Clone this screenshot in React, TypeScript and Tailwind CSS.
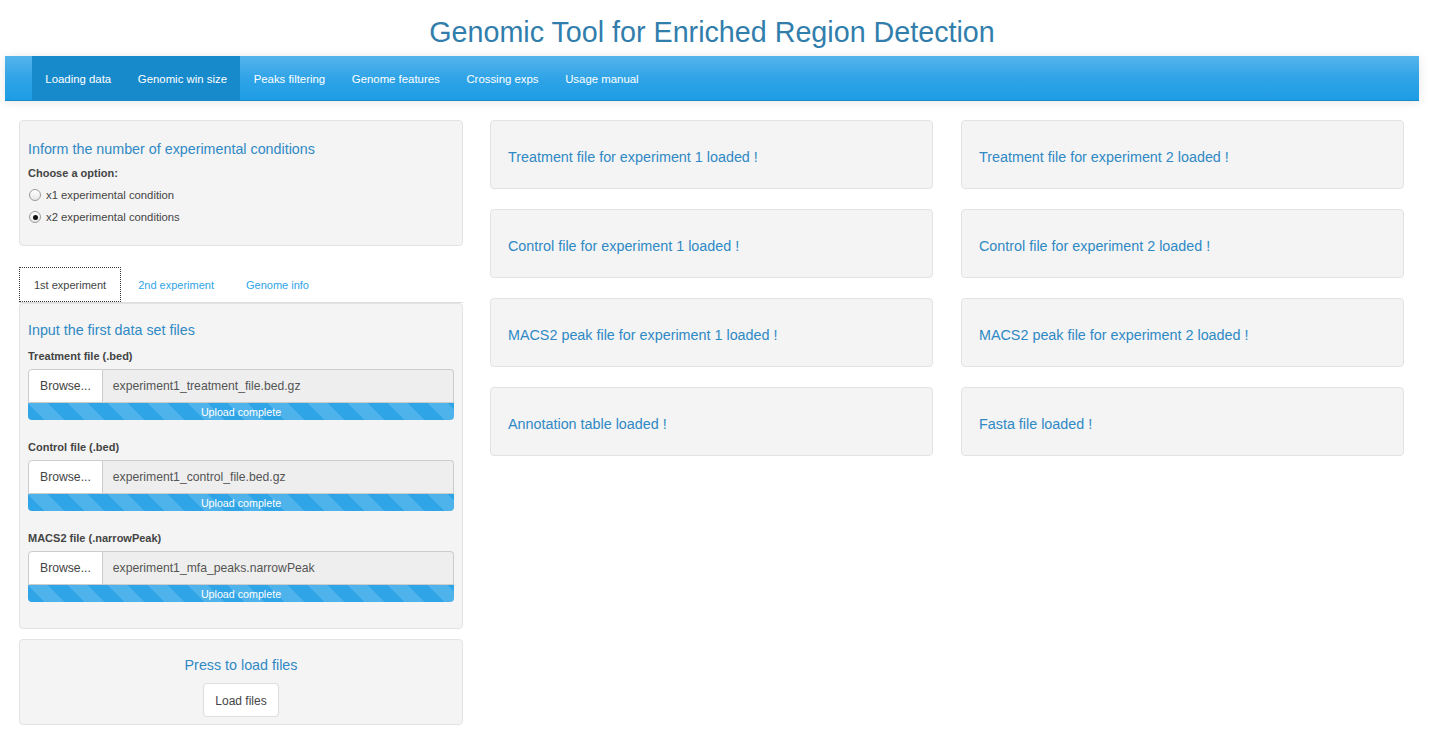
import React from 'react'

// ---------------------------------------------------------------------------
// Data
// ---------------------------------------------------------------------------

const navItems = [
  { label: 'Loading data', active: true },
  { label: 'Genomic win size', active: true },
  { label: 'Peaks filtering', active: false },
  { label: 'Genome features', active: false },
  { label: 'Crossing exps', active: false },
  { label: 'Usage manual', active: false },
]

const files = [
  { label: 'Treatment file (.bed)', name: 'experiment1_treatment_file.bed.gz' },
  { label: 'Control file (.bed)', name: 'experiment1_control_file.bed.gz' },
  { label: 'MACS2 file (.narrowPeak)', name: 'experiment1_mfa_peaks.narrowPeak' },
]

const exp1 = [
  'Treatment file for experiment 1 loaded !',
  'Control file for experiment 1 loaded !',
  'MACS2 peak file for experiment 1 loaded !',
  'Annotation table loaded !',
]

const exp2 = [
  'Treatment file for experiment 2 loaded !',
  'Control file for experiment 2 loaded !',
  'MACS2 peak file for experiment 2 loaded !',
  'Fasta file loaded !',
]

// ---------------------------------------------------------------------------
// Pieces
// ---------------------------------------------------------------------------

function Radio({ checked, label }: { checked?: boolean; label: string }) {
  return (
    <div className="flex items-center h-[22px] pl-[1px]">
      <span className="flex items-center justify-center w-[12px] h-[12px] rounded-full border border-[#9a9a9a] bg-gradient-to-b from-white to-[#e8e8e8]">
        {checked && <span className="w-[5px] h-[5px] rounded-full bg-[#111]" />}
      </span>
      <span className="ml-[5px] text-[11.3px] text-[#444]">{label}</span>
    </div>
  )
}

function FileInput({ label, name }: { label: string; name: string }) {
  return (
    <div className="flex flex-col">
      <div className="h-[16px] leading-[16px] text-[11px] font-bold text-[#444]">{label}</div>
      <div className="mt-[5px] flex h-[34px]">
        <div className="flex items-center px-[11px] bg-white border border-[#ccc] rounded-tl-[4px] text-[12.2px] text-[#444]">
          Browse...
        </div>
        <div className="flex-1 flex items-center px-[10px] bg-[#eeeeee] border border-l-0 border-[#ccc] rounded-tr-[4px] text-[12.2px] text-[#555]">
          {name}
        </div>
      </div>
      <div className="h-[17px] flex items-center justify-center pt-[2px] rounded-b-[4px] bg-[#2fa4e7] bg-[linear-gradient(45deg,rgba(255,255,255,.15)_25%,transparent_25%,transparent_50%,rgba(255,255,255,.15)_50%,rgba(255,255,255,.15)_75%,transparent_75%,transparent)] bg-[length:40px_40px] text-[10.7px] text-white">
        Upload complete
      </div>
    </div>
  )
}

function StatusCard({ text }: { text: string }) {
  return (
    <div className="h-[69px] flex items-center px-[17px] pt-[6px] bg-[#f4f4f4] border border-[#e3e3e3] rounded-[4px]">
      <span className="text-[14.35px] text-[#2f89c5]">{text}</span>
    </div>
  )
}

// ---------------------------------------------------------------------------
// Component
// ---------------------------------------------------------------------------

export default function App() {
  return (
    <div
      className="w-[1424px] min-h-[740px] bg-white text-[#555]"
      style={{ fontFamily: '"Liberation Sans", Arial, sans-serif' }}
    >
      {/* Title */}
      <div className="h-[56px] pt-[12px] text-center">
        <h1 className="text-[28.7px] leading-[40px] text-[#317eac]">Genomic Tool for Enriched Region Detection</h1>
      </div>

      {/* Navbar */}
      <nav className="mx-[5px] h-[45px] flex pl-[27px] bg-gradient-to-b from-[#54b4eb] via-[#2fa4e7] to-[#1d9ce5] border-b border-[#178acc] shadow-[0_1px_10px_rgba(0,0,0,0.1)]">
        {navItems.map(item => (
          <div
            key={item.label}
            className={`flex items-center pt-[3px] px-[13.3px] text-[11.4px] text-white ${item.active ? 'bg-[#178acc]' : ''}`}
          >
            {item.label}
          </div>
        ))}
      </nav>

      {/* Main */}
      <div className="flex items-start pl-[19px] pt-[19px]">
        {/* Left column */}
        <div className="w-[444px] flex flex-col">
          <div className="h-[126px] px-[8px] pt-[18px] bg-[#f4f4f4] border border-[#e3e3e3] rounded-[4px]">
            <h4 className="text-[14.3px] leading-[20px] text-[#2f89c5]">Inform the number of experimental conditions</h4>
            <div className="mt-[6px] h-[16px] leading-[16px] text-[11px] font-bold text-[#444]">Choose a option:</div>
            <div className="mt-[3px]">
              <Radio label="x1 experimental condition" />
              <Radio checked label="x2 experimental conditions" />
            </div>
          </div>

          {/* Tabs */}
          <div className="mt-[21px] flex h-[36px] border-b border-[#ddd]">
            <div className="flex items-center pt-[1px] px-[14px] bg-white border border-dotted border-[#333] text-[11px] text-[#444]">
              1st experiment
            </div>
            <div className="flex items-center pt-[1px] ml-[2px] px-[15px] text-[11px] text-[#2fa4e7]">2nd experiment</div>
            <div className="flex items-center pt-[1px] ml-[2px] px-[15px] text-[11px] text-[#2fa4e7]">Genome info</div>
          </div>

          <div className="h-[326px] px-[8px] pt-[16px] bg-[#f4f4f4] border border-[#e3e3e3] rounded-[4px]">
            <h4 className="text-[14.3px] leading-[20px] text-[#2f89c5]">Input the first data set files</h4>
            <div className="mt-[8px] flex flex-col gap-[19px]">
              {files.map(f => (
                <FileInput key={f.label} label={f.label} name={f.name} />
              ))}
            </div>
          </div>

          {/* Load */}
          <div className="mt-[10px] h-[86px] flex flex-col items-center pt-[15px] bg-[#f4f4f4] border border-[#e3e3e3] rounded-[4px]">
            <h4 className="text-[14.3px] leading-[20px] text-[#2f89c5]">Press to load files</h4>
            <button className="mt-[8px] h-[34px] px-[11px] pt-[2px] bg-white border border-[#ddd] rounded-[4px] text-[12px] text-[#444]">
              Load files
            </button>
          </div>
        </div>

        {/* Experiment 1 */}
        <div className="ml-[27px] w-[443px] flex flex-col gap-[20px]">
          {exp1.map(t => (
            <StatusCard key={t} text={t} />
          ))}
        </div>

        {/* Experiment 2 */}
        <div className="ml-[28px] w-[443px] flex flex-col gap-[20px]">
          {exp2.map(t => (
            <StatusCard key={t} text={t} />
          ))}
        </div>
      </div>
    </div>
  )
}
